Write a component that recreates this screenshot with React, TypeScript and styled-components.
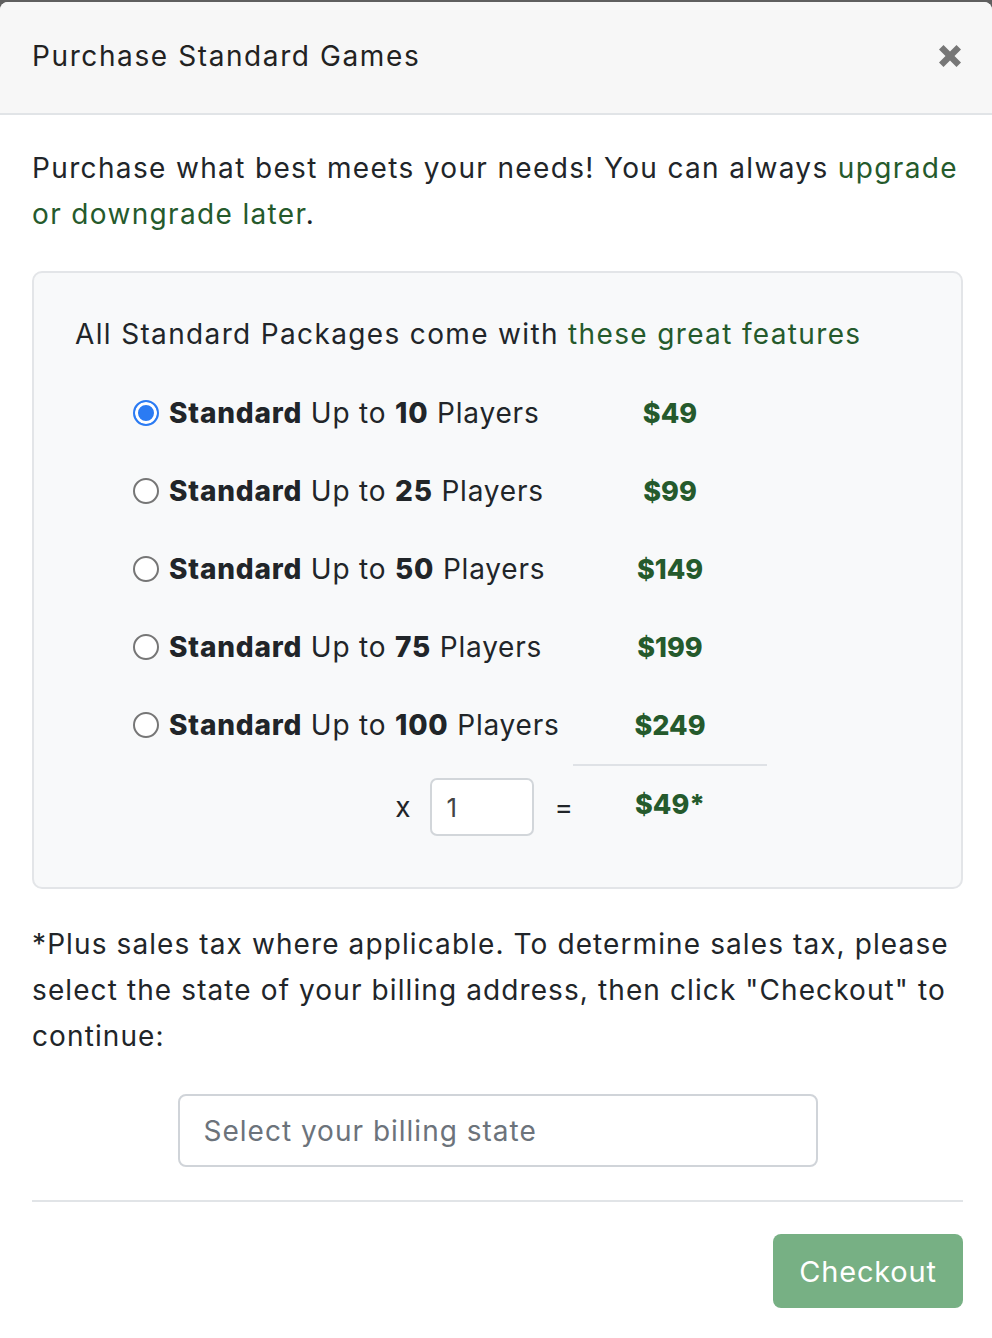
import React, { useState } from 'react'
import styled, { createGlobalStyle } from 'styled-components'

const GlobalStyle = createGlobalStyle`
    html, body {
        margin: 0;
        padding: 0;
        background: #5f5f5f;
    }
    body {
        font-family: Inter, "Open Sans", sans-serif;
        color: #212529;
    }
`

const green = '#255a2c'

const Modal = styled.div`
    margin-top: 2px;
    background: #ffffff;
    border-radius: 8px 8px 0 0;
    overflow: hidden;
    min-height: 1336px;
`

const Header = styled.header`
    background: #f7f7f7;
    height: 111px;
    border-bottom: 2px solid #e1e4e7;
    display: flex;
    align-items: center;
    justify-content: space-between;
    padding: 0 29px 0 32px;
`

const Title = styled.h1`
    margin: 0 0 4px 0;
    font-size: 28px;
    font-weight: 400;
    color: #222;
    letter-spacing: 1.6px;
`

const Close = styled.button`
    border: none;
    background: none;
    padding: 0;
    width: 26px;
    height: 26px;
    margin-bottom: 4px;
    display: flex;
    align-items: center;
    justify-content: center;
    cursor: pointer;
`

const Body = styled.div`
    padding: 30px 29px 0 32px;
`

const Para = styled.p`
    margin: 0;
    font-size: 28px;
    line-height: 46px;
    letter-spacing: 1.35px;
`

const Green = styled.span`
    color: ${green};
`

const Card = styled.div`
    margin-top: 34px;
    background: #f8f9fa;
    border: 2px solid #e3e5e8;
    border-radius: 10px;
    padding: 38px 20px 37px 41px;
`

const Features = styled.div`
    margin-left: 58px;
    margin-top: 17px;
    display: grid;
    grid-template-columns: 440px 194px;
`

const Option = styled.label`
    height: 78px;
    display: flex;
    align-items: center;
    gap: 10px;
    font-size: 28px;
    letter-spacing: 0.8px;
    cursor: pointer;
    white-space: nowrap;

    b {
        font-weight: 800;
    }
`

const Radio = styled.span<{ checked?: boolean }>`
    box-sizing: border-box;
    width: 26px;
    height: 26px;
    border-radius: 50%;
    flex: 0 0 auto;
    border: 2px solid ${props => props.checked ? '#2b7bf3' : '#767676'};
    background: ${props => props.checked ? '#2b7bf3' : '#ffffff'};
    box-shadow: ${props => props.checked ? 'inset 0 0 0 3px #ffffff' : 'none'};
`

const Price = styled.div<{ total?: boolean }>`
    height: ${props => props.total ? '86px' : '78px'};
    display: flex;
    align-items: center;
    justify-content: center;
    font-weight: 800;
    font-size: 27px;
    color: ${green};
    border-top: ${props => props.total ? '2px solid #dfe2e6' : 'none'};
    box-sizing: border-box;
    padding-bottom: ${props => props.total ? '8px' : '0'};
`

const QtyCell = styled.div`
    height: 86px;
    box-sizing: border-box;
    display: flex;
    align-items: center;
    justify-content: flex-end;
    font-size: 28px;
`

const Times = styled.span`
    margin-right: 20px;
`

const QtyInput = styled.input`
    box-sizing: border-box;
    width: 104px;
    height: 58px;
    border: 2px solid #d2d6da;
    border-radius: 7px;
    background: #fff;
    padding: 0 14px;
    font-family: Inter, sans-serif;
    font-size: 26px;
    color: #444;
    margin-right: 20px;
    outline: none;
`

const Note = styled(Para)`
    margin-top: 32px;
    letter-spacing: 1.1px;
`

const SelectWrap = styled.div`
    display: flex;
    justify-content: center;
    margin-top: 35px;
`

const StateSelect = styled.select`
    box-sizing: border-box;
    width: 640px;
    height: 73px;
    border: 2px solid #d0d4d9;
    border-radius: 8px;
    background: #fff;
    padding: 0 24px;
    font-family: Inter, sans-serif;
    font-size: 28px;
    letter-spacing: 1px;
    color: #6c737b;
    appearance: none;
    outline: none;
`

const Divider = styled.hr`
    margin: 33px 0 0 0;
    border: none;
    border-top: 2px solid #e1e4e7;
`

const Footer = styled.div`
    display: flex;
    justify-content: flex-end;
    padding-top: 32px;
`

const CheckoutButton = styled.button`
    width: 190px;
    height: 74px;
    border: none;
    border-radius: 8px;
    background: #77b084;
    color: #fff;
    font-family: Inter, sans-serif;
    font-size: 29px;
    letter-spacing: 0.8px;
    cursor: pointer;
`

const packages = [
    { players: 10, price: 49 },
    { players: 25, price: 99 },
    { players: 50, price: 149 },
    { players: 75, price: 199 },
    { players: 100, price: 249 },
]

export default function App() {
    const [selected, setSelected] = useState(0)
    const [qty, setQty] = useState('1')
    const total = packages[selected].price * (parseInt(qty) || 0)

    return (
        <>
            <GlobalStyle />
            <Modal>
                <Header>
                    <Title>Purchase Standard Games</Title>
                    <Close aria-label="Close">
                        <svg width="24" height="24" viewBox="0 0 24 24">
                            <path d="M1 5.5 L5.5 1 L12 7.5 L18.5 1 L23 5.5 L16.5 12 L23 18.5 L18.5 23 L12 16.5 L5.5 23 L1 18.5 L7.5 12 Z" fill="#777" />
                        </svg>
                    </Close>
                </Header>
                <Body>
                    <Para>
                        Purchase what best meets your needs! You can always <Green>upgrade or downgrade later</Green>.
                    </Para>
                    <Card>
                        <Para>
                            All Standard Packages come with <Green>these great features</Green>
                        </Para>
                        <Features>
                            {packages.map((p, i) => (
                                <React.Fragment key={p.players}>
                                    <Option onClick={() => setSelected(i)}>
                                        <Radio checked={selected === i} />
                                        <span><b>Standard</b> Up to <b>{p.players}</b> Players</span>
                                    </Option>
                                    <Price>${p.price}</Price>
                                </React.Fragment>
                            ))}
                            <QtyCell>
                                <Times>x</Times>
                                <QtyInput value={qty} onChange={e => setQty(e.target.value)} />
                                <span>=</span>
                            </QtyCell>
                            <Price total>${total}*</Price>
                        </Features>
                    </Card>
                    <Note>
                        *Plus sales tax where applicable. To determine sales tax, please select the state of your billing address, then click "Checkout" to continue:
                    </Note>
                    <SelectWrap>
                        <StateSelect defaultValue="">
                            <option value="" disabled>Select your billing state</option>
                        </StateSelect>
                    </SelectWrap>
                    <Divider />
                    <Footer>
                        <CheckoutButton>Checkout</CheckoutButton>
                    </Footer>
                </Body>
            </Modal>
        </>
    )
}
